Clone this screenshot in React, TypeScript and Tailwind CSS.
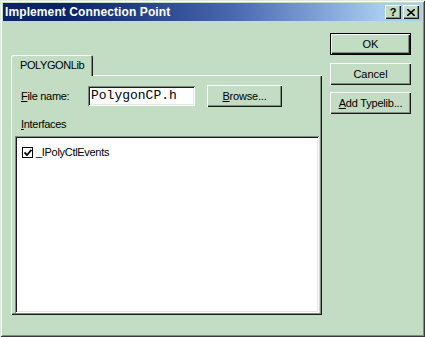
import React from "react";

const raised =
  "shadow-[inset_1px_1px_0_#ffffff,inset_-1px_-1px_0_#1a1a1a,inset_-2px_-2px_0_#7d8f7e]";
const sunken =
  "shadow-[inset_1px_1px_0_#7d8f7e,inset_-1px_-1px_0_#ffffff,inset_2px_2px_0_#1a1a1a,inset_-2px_-2px_0_#dfe9df]";

function U({ c }: { c: string }) {
  return <span className="underline underline-offset-[1px]">{c}</span>;
}

function Btn({
  children,
  def,
  className = "",
}: {
  children: React.ReactNode;
  def?: boolean;
  className?: string;
}) {
  return (
    <div
      className={
        "flex items-center justify-center bg-[#c3dcc4] text-[11px] text-black " +
        (def ? "border border-black " : "") +
        className
      }
    >
      <div className={"flex h-full w-full items-center justify-center " + raised}>
        {children}
      </div>
    </div>
  );
}

export default function App() {
  return (
    <div
      className="flex h-[337px] w-[425px] flex-col bg-[#c3dcc4] p-[3px] shadow-[inset_1px_1px_0_#dfeadf,inset_-1px_-1px_0_#3a3a3a,inset_2px_2px_0_#ffffff,inset_-2px_-2px_0_#7d8f7e]"
      style={{ fontFamily: '"Liberation Sans", Arial, sans-serif' }}
    >
      {/* title bar */}
      <div className="flex h-[18px] items-center justify-between bg-gradient-to-r from-[#0b2468] from-15% via-[#4a68b0] via-55% to-[#a9cbef] to-90% pl-[2px] pr-[3px]">
        <span className="text-[12px] font-bold tracking-[0.1px] text-white">
          Implement Connection Point
        </span>
        <div className="flex gap-[1px]">
          <div className={"flex h-[14px] w-[16px] items-center justify-center bg-[#c3dcc4] text-[11px] font-bold leading-none text-black " + raised}>
            ?
          </div>
          <div className={"ml-[1px] flex h-[14px] w-[16px] items-center justify-center bg-[#c3dcc4] " + raised}>
            <svg width="8" height="7" viewBox="0 0 8 7">
              <path d="M0 0 L8 7 M8 0 L0 7" stroke="#000" strokeWidth="1.6" />
            </svg>
          </div>
        </div>
      </div>

      {/* body */}
      <div className="flex flex-1 pl-[8px]">
        {/* left */}
        <div className="flex w-[311px] flex-col pt-[34px] pb-[19px]">
          <div className="flex">
            <div className="relative z-10 -mb-[1px] flex h-[21px] w-[82px] items-center rounded-t-[2px] bg-[#c3dcc4] pl-[9px] text-[11px] tracking-[-0.4px] text-black shadow-[inset_1px_1px_0_#ffffff,inset_-1px_0_0_#1a1a1a,inset_-2px_0_0_#7d8f7e]">
              POLYGONLib
            </div>
          </div>
          <div className="flex flex-1 flex-col pl-[4px] pr-[3px] pb-[2px] shadow-[inset_1px_1px_0_#ffffff,inset_-1px_-1px_0_#1a1a1a,inset_-2px_-2px_0_#7d8f7e]">
            <div className="mt-[10px] flex h-[22px] items-center">
              <span className="ml-[6px] w-[67px] text-[11px] tracking-[-0.3px] text-black">
                <U c="F" />ile name:
              </span>
              <div className={"flex h-[20px] w-[107px] items-center bg-white pl-[3px] text-[13px] text-black " + sunken} style={{ fontFamily: '"Liberation Mono", "Courier New", monospace' }}>
                PolygonCP.h
              </div>
              <Btn className="ml-[12px] h-[22px] w-[75px]">
                <span className="tracking-[-0.2px]">
                  <U c="B" />rowse...
                </span>
              </Btn>
            </div>
            <div className="ml-[6px] mt-[10px] h-[14px] text-[11px] leading-[14px] tracking-[-0.3px] text-black">
              <U c="I" />nterfaces
            </div>
            <div className={"mt-[5px] flex flex-1 flex-col bg-white p-[2px] " + sunken}>
              <div className="ml-[5px] mt-[6px] flex items-center">
                <div className="flex h-[11px] w-[11px] items-center justify-center border-[1.5px] border-black bg-white">
                  <svg width="8" height="7" viewBox="0 0 8 7">
                    <path d="M0.5 3.5 L3 6 L7.5 0.8" fill="none" stroke="#000" strokeWidth="1.8" />
                  </svg>
                </div>
                <span className="ml-[3px] text-[11px] tracking-[-0.3px] text-black">_IPolyCtlEvents</span>
              </div>
            </div>
          </div>
        </div>

        {/* right buttons */}
        <div className="ml-[8px] flex flex-col pt-[12px]">
          <Btn def className="h-[22px] w-[81px]">
            <span>OK</span>
          </Btn>
          <Btn className="mt-[8px] h-[22px] w-[81px]">
            <span>Cancel</span>
          </Btn>
          <Btn className="mt-[7px] h-[22px] w-[81px]">
            <span className="tracking-[-0.2px]">
              <U c="A" />dd Typelib...
            </span>
          </Btn>
        </div>
      </div>
    </div>
  );
}
